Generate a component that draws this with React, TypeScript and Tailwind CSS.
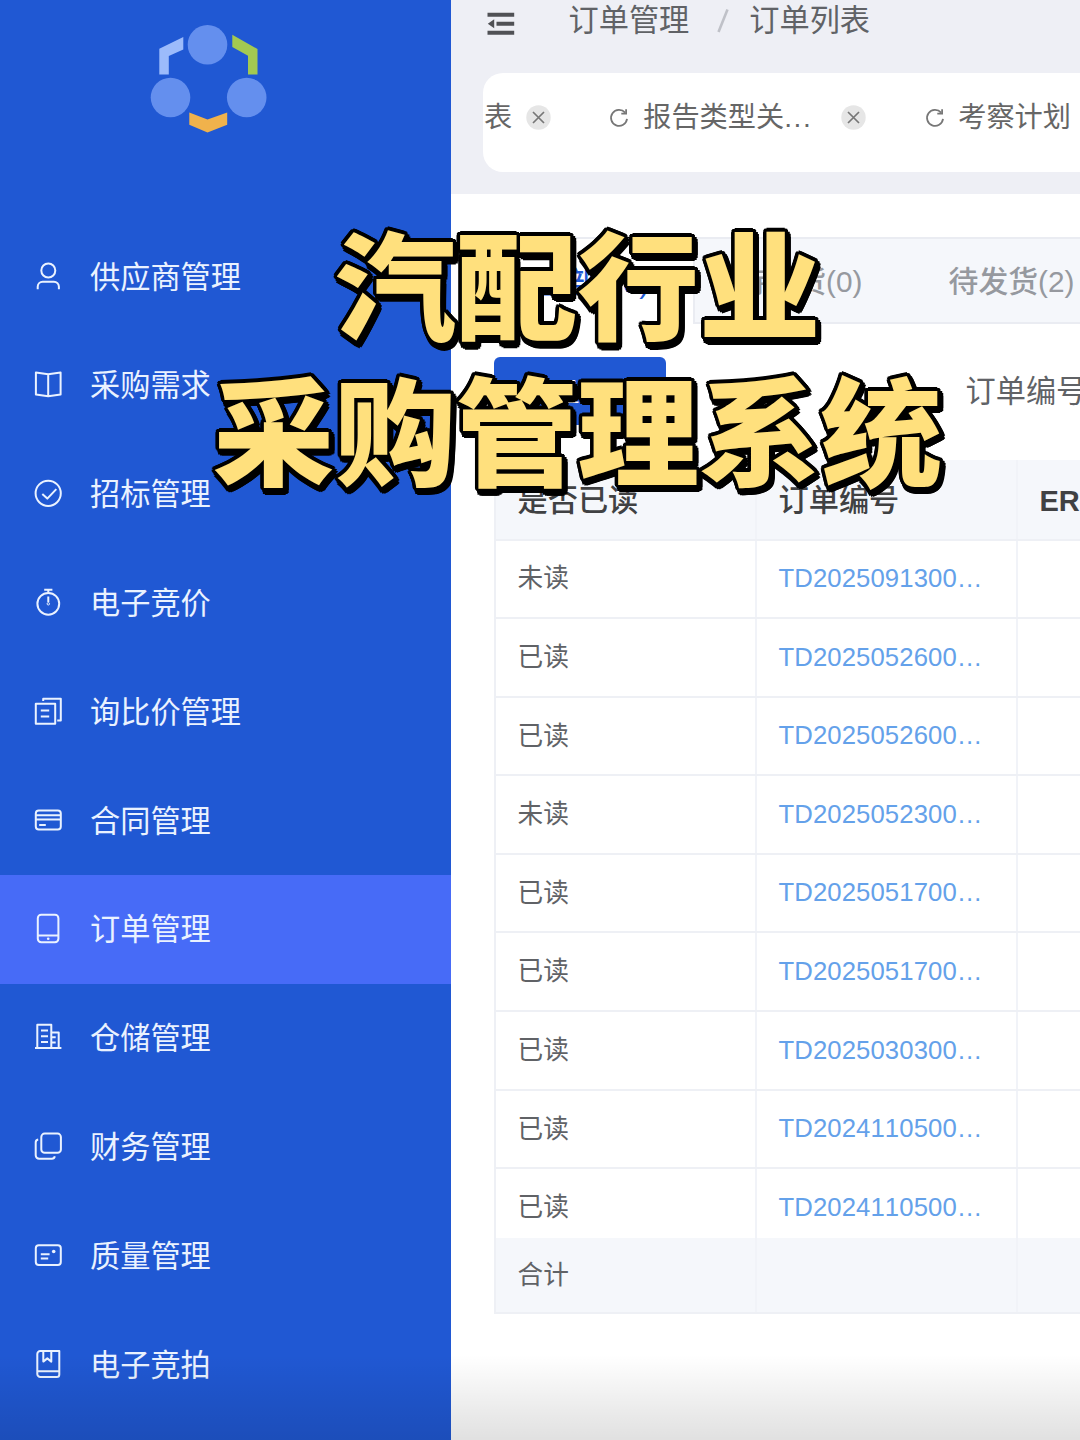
import type { ReactNode } from 'react';
import clsx from 'clsx';

interface MenuItem {
  label: string;
  icon: ReactNode;
  active?: boolean;
}

const menuItems: MenuItem[] = [
  {
    label: '供应商管理',
    icon: (
      <>
        <circle cx="16.3" cy="9.5" r="7" />
        <path d="M5.7 28.3v-2.6a5 5 0 0 1 5-5h11.2a5 5 0 0 1 5 5v2.6" />
      </>
    ),
  },
  {
    label: '采购需求',
    icon: <path d="M16.2 5.2 3.9 3.6v22l12.3 1.6 12.4-1.6v-22L16.2 5.2v22" />,
  },
  {
    label: '招标管理',
    icon: (
      <>
        <circle cx="16.2" cy="15.3" r="12.6" />
        <path d="m10.3 15.9 5 4.7 9-9.5" />
      </>
    ),
  },
  {
    label: '电子竞价',
    icon: (
      <>
        <circle cx="16.3" cy="16.8" r="10.9" />
        <path d="M12.2 2.8h8.2M16.3 2.8v3M16.3 9.5v5.5" />
        <circle cx="16.3" cy="16.8" r="1.2" strokeWidth="1" />
      </>
    ),
  },
  {
    label: '询比价管理',
    icon: (
      <>
        <path d="M3.8 7.8h19.4v20H3.8zM8.8 14.6h8.4M8.8 20.5h8.4" />
        <path d="M11.2 5V2.7h17.6v21.9h-3.6" />
      </>
    ),
  },
  {
    label: '合同管理',
    icon: (
      <>
        <rect x="3.8" y="5.4" width="25" height="19.2" rx="3" />
        <path d="M3.8 10.3h25M3.8 14.6h25M7.2 20h6.6" />
      </>
    ),
  },
  {
    label: '订单管理',
    active: true,
    icon: (
      <>
        <rect x="5.8" y="1.8" width="20.6" height="27.4" rx="3.4" />
        <path d="M5.8 22.5h20.6" />
        <circle cx="16.2" cy="25.8" r="1.3" fill="currentColor" stroke="none" />
      </>
    ),
  },
  {
    label: '仓储管理',
    icon: (
      <>
        <path d="M3 26h26.4M5.3 26V2.7h14V26M19.3 10.6h7.4V26" />
        <path d="M9 8.6h7M9 14.2h7M9 20.1h7M19.3 15.3h4.4M19.3 20.4h4.4" />
      </>
    ),
  },
  {
    label: '财务管理',
    icon: (
      <>
        <rect x="9.3" y="2.6" width="19.6" height="19.2" rx="3.4" />
        <path d="M6.2 8.4a3 3 0 0 0-2.5 3v12.9a3.4 3.4 0 0 0 3.4 3.4h12.7a3 3 0 0 0 3-2.4" />
      </>
    ),
  },
  {
    label: '质量管理',
    icon: (
      <>
        <rect x="3.8" y="5.3" width="25" height="19.8" rx="3" />
        <path d="M8.8 14.3h8.8M8.8 18.6h7.4" />
        <circle cx="21.7" cy="11.5" r="1.8" fill="currentColor" stroke="none" />
      </>
    ),
  },
  {
    label: '电子竞拍',
    icon: (
      <>
        <path d="M27.3 22.3V2h-19a3 3 0 0 0-3 3v19.9a3 3 0 0 0 3 3h16.5a2.5 2.5 0 0 0 2.5-2.5v-3.1h-22" />
        <path d="M11.3 2v10.6l4-3.2 4 3.2V2" />
      </>
    ),
  },
];

const orders = [
  { read: false, no: 'TD2025091300…' },
  { read: true, no: 'TD2025052600…' },
  { read: true, no: 'TD2025052600…' },
  { read: false, no: 'TD2025052300…' },
  { read: true, no: 'TD2025051700…' },
  { read: true, no: 'TD2025051700…' },
  { read: true, no: 'TD2025030300…' },
  { read: true, no: 'TD2024110500…' },
  { read: true, no: 'TD2024110500…' },
];

const rowClassName = 'grid shrink-0 grid-cols-[261px_261px_261px] border-b-2 border-[#eef0f5]';
const cellClassName = 'flex items-center border-r-2 border-[#f1f3f8] pl-[22px]';

function Logo() {
  return (
    <svg width="120" height="112" viewBox="0 0 120 112" className="ml-[149px] mt-[23px]">
      <g fill="#648fee">
        <circle cx="58.5" cy="21.7" r="19.8" />
        <circle cx="21.5" cy="74.5" r="19.8" />
        <circle cx="97.7" cy="74.5" r="19.8" />
      </g>
      <path d="M10.3 51.5V25.7L34.3 14v12.5l-14.5 6.600v18.4z" fill="#9cbbfb" />
      <path d="M83.3 11.7 108.5 26v25.5H99V32.7L83.3 24z" fill="#a3c951" />
      <path d="M40.3 89.5 58.5 96.5 78.2 89.5v12.3L58.5 109.5 40.3 101.8z" fill="#f0b24c" />
    </svg>
  );
}

function Sidebar() {
  return (
    <aside className="flex w-[450.5px] shrink-0 flex-col bg-[#2058d3] text-[#eaf2ff]">
      <div className="h-[222.3px] shrink-0">
        <Logo />
      </div>
      {menuItems.map(item => (
        <div
          key={item.label}
          className={clsx(
            'flex h-[108.8px] shrink-0 items-center pl-8',
            item.active && 'bg-[#476bf7]'
          )}
        >
          <svg
            width="32"
            height="32"
            viewBox="0 0 32 32"
            fill="none"
            stroke="currentColor"
            strokeWidth="2"
            strokeLinejoin="round"
          >
            {item.icon}
          </svg>
          <span className="ml-[26px] pt-0.5 text-[30.2px] leading-none">{item.label}</span>
        </div>
      ))}
    </aside>
  );
}

function RefreshIcon() {
  return (
    <svg
      width="20"
      height="20"
      viewBox="0 0 20 20"
      fill="none"
      stroke="#777"
      strokeWidth="1.8"
      className="shrink-0"
    >
      <path d="M18 10.8A8 8 0 1 1 16.1 4.6" />
      <path d="M17.1 1.2v4.500h-4.800" />
    </svg>
  );
}

function CloseBadge() {
  return (
    <svg width="25" height="25" viewBox="0 0 25 25" className="shrink-0">
      <circle cx="12.5" cy="12.5" r="12.2" fill="#e6e6e6" />
      <path d="m7 7 11 11M18 7 7 18" stroke="#777" strokeWidth="1.7" />
    </svg>
  );
}

function TopBar() {
  return (
    <header className="h-[194px] shrink-0 overflow-hidden bg-[#eeeff5]">
      <div className="flex h-[73px] items-start pl-9 text-[30.2px] leading-none text-[#606266]">
        <svg width="28" height="24" viewBox="0 0 28 24" fill="#505155" className="mt-[12px]">
          <path d="M.5.8h26.7v4H.5zM9.5 9.8h17.7v4H9.5zM.5 18.8h26.7v4H.5zM7.2 7.2v9L.8 11.7z" />
        </svg>
        <span className="ml-[54px] mt-[6px]">订单管理</span>
        <svg width="12" height="24" viewBox="0 0 12 24" className="ml-[28px] mt-[9px]">
          <path d="M10.5.5 1.500 23" stroke="#bfc1c8" strokeWidth="2.6" />
        </svg>
        <span className="ml-5 mt-[6px]">订单列表</span>
      </div>
      <div className="ml-[32.5px] flex h-[99px] items-start overflow-hidden whitespace-nowrap rounded-l-[20px] bg-white text-[28.2px] leading-none text-[#666]">
        <div className="flex h-[89px] items-center">
          <span className="ml-px">表</span>
          <div className="ml-[14px]">
            <CloseBadge />
          </div>
          <div className="ml-[58px]">
            <RefreshIcon />
          </div>
          <span className="ml-[14px] w-[170px]">
            报告类型关<span className="tracking-[1.6px]">...</span>
          </span>
          <div className="ml-[28px]">
            <CloseBadge />
          </div>
          <div className="ml-[59px]">
            <RefreshIcon />
          </div>
          <span className="ml-[13px]">考察计划</span>
        </div>
      </div>
    </header>
  );
}

function StatusTabs() {
  return (
    <div className="ml-[43px] mt-[42.5px] flex h-[87px] shrink-0 whitespace-nowrap border-y-2 border-[#eaecf2] bg-[#f5f7fb] text-[29.8px] font-medium leading-none text-[#96999f]">
      <div className="-mb-0.5 flex w-[201px] shrink-0 items-center justify-center border-r-2 border-[#eaecf2] bg-white pt-1 text-[#2058d3]">
        全部(10)
      </div>
      <div className="flex w-[210px] shrink-0 items-center justify-center pt-1">待收货(0)</div>
      <div className="flex w-[214px] shrink-0 items-center justify-center pt-1">待发货(2)</div>
    </div>
  );
}

function OrderTable() {
  return (
    <div className="ml-[43px] mt-[35px] flex w-[783px] shrink-0 flex-col border-l-2 border-[#eef0f5] text-[25.7px] leading-none text-[#606266]">
      <div
        className={clsx(
          rowClassName,
          'h-[81px] bg-[#f5f7fb] text-[30.2px] font-medium text-[#404143]'
        )}
      >
        <div className={clsx(cellClassName, 'pt-1')}>是否已读</div>
        <div className={clsx(cellClassName, 'pt-1')}>订单编号</div>
        <div className={clsx(cellClassName, 'pt-1 text-[29px] font-bold')}>ERP订单号</div>
      </div>
      <div className="flex h-[697.5px] flex-col overflow-hidden">
        {orders.map((order, index) => (
          <div key={index} className={clsx(rowClassName, 'h-[78.6px]')}>
            <div className={clsx(cellClassName, 'pt-px')}>{order.read ? '已读' : '未读'}</div>
            <div
              className={clsx(
                cellClassName,
                'tracking-[0.1px] text-[#64a1ea] [font-kerning:none]'
              )}
            >
              {order.no}
            </div>
            <div className={cellClassName} />
          </div>
        ))}
      </div>
      <div className={clsx(rowClassName, 'h-[76px] bg-[#f5f7fb]')}>
        <div className={clsx(cellClassName, 'pt-0.5')}>合计</div>
        <div className={cellClassName} />
        <div className={cellClassName} />
      </div>
    </div>
  );
}

// Ring of hard shadows gives a round-cornered outline, the last ones add the drop towards bottom right.
function Caption() {
  return (
    <div className="pointer-events-none absolute left-0 top-[207px] w-[1155px] origin-top scale-y-[0.96] text-center font-['Noto_Sans_CJK_SC',sans-serif] text-[121.5px] font-black leading-[152px] text-[#ffe07d] [text-shadow:3.5px_0_0_#000,3.2px_1.4px_0_#000,2.5px_2.5px_0_#000,1.4px_3.2px_0_#000,0_3.5px_0_#000,-1.4px_3.2px_0_#000,-2.5px_2.5px_0_#000,-3.2px_1.4px_0_#000,-3.5px_0_0_#000,-3.2px_-1.4px_0_#000,-2.5px_-2.5px_0_#000,-1.4px_-3.2px_0_#000,0_-3.5px_0_#000,1.4px_-3.2px_0_#000,2.5px_-2.5px_0_#000,3.2px_-1.4px_0_#000,-1.5px_4px_0_#000,-1px_6px_0_#000,1px_7.5px_0_#000,3px_8px_0_#000,5px_7px_0_#000,6px_5px_0_#000,6px_2px_0_#000,5px_0_0_#000]">
      <div>汽配行业</div>
      <div>采购管理系统</div>
    </div>
  );
}

export default function App() {
  return (
    <div className="relative flex h-[1440px] w-[1080px] overflow-hidden bg-white font-['Liberation_Sans','Noto_Sans_CJK_SC',sans-serif]">
      <Sidebar />
      <main className="flex min-w-0 flex-1 flex-col overflow-hidden">
        <TopBar />
        <StatusTabs />
        <div className="ml-[43px] mt-[33px] flex h-[68px] shrink-0 items-center whitespace-nowrap">
          <button
            type="button"
            className="h-[68px] w-[172px] shrink-0 rounded-md bg-[#2058d3] pt-1 text-[25px] leading-none text-white"
          >
            批量导出
          </button>
          <span className="ml-[300px] pt-1 text-[30.2px] leading-none text-[#606266]">
            订单编号
          </span>
        </div>
        <OrderTable />
      </main>
      <div className="pointer-events-none absolute inset-x-0 bottom-0 h-[85px] bg-linear-to-b from-transparent to-black/12" />
      <Caption />
    </div>
  );
}
